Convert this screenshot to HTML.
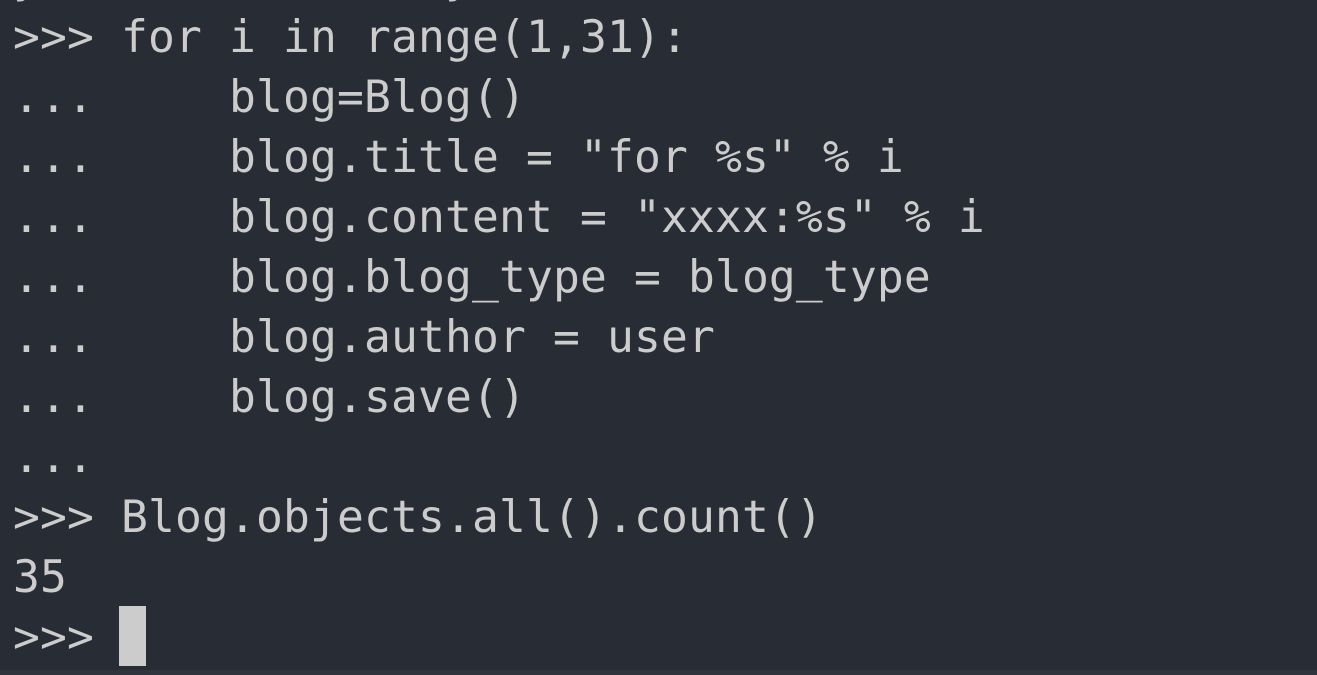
<!DOCTYPE html>
<html><head><meta charset="utf-8"><style>
html,body{margin:0;padding:0;}
body{width:1317px;height:675px;background:#282c34;overflow:hidden;position:relative;}
pre{position:absolute;left:13px;top:-53px;margin:0;font-family:"DejaVu Sans Mono","Liberation Mono",monospace;font-size:44.6px;line-height:60px;letter-spacing:0.15px;color:#cccccc;white-space:pre;}
.cur{position:absolute;left:119px;top:606px;width:27px;height:60px;background:#cccccc;}
.bot{position:absolute;left:0;top:670px;width:1317px;height:5px;background:#30343c;}
</style></head><body>
<pre>y               y
&gt;&gt;&gt; for i in range(1,31):
...     blog=Blog()
...     blog.title = "for %s" % i
...     blog.content = "xxxx:%s" % i
...     blog.blog_type = blog_type
...     blog.author = user
...     blog.save()
...
&gt;&gt;&gt; Blog.objects.all().count()
35
&gt;&gt;&gt; </pre>
<div class="cur"></div>
<div class="bot"></div>
</body></html>
